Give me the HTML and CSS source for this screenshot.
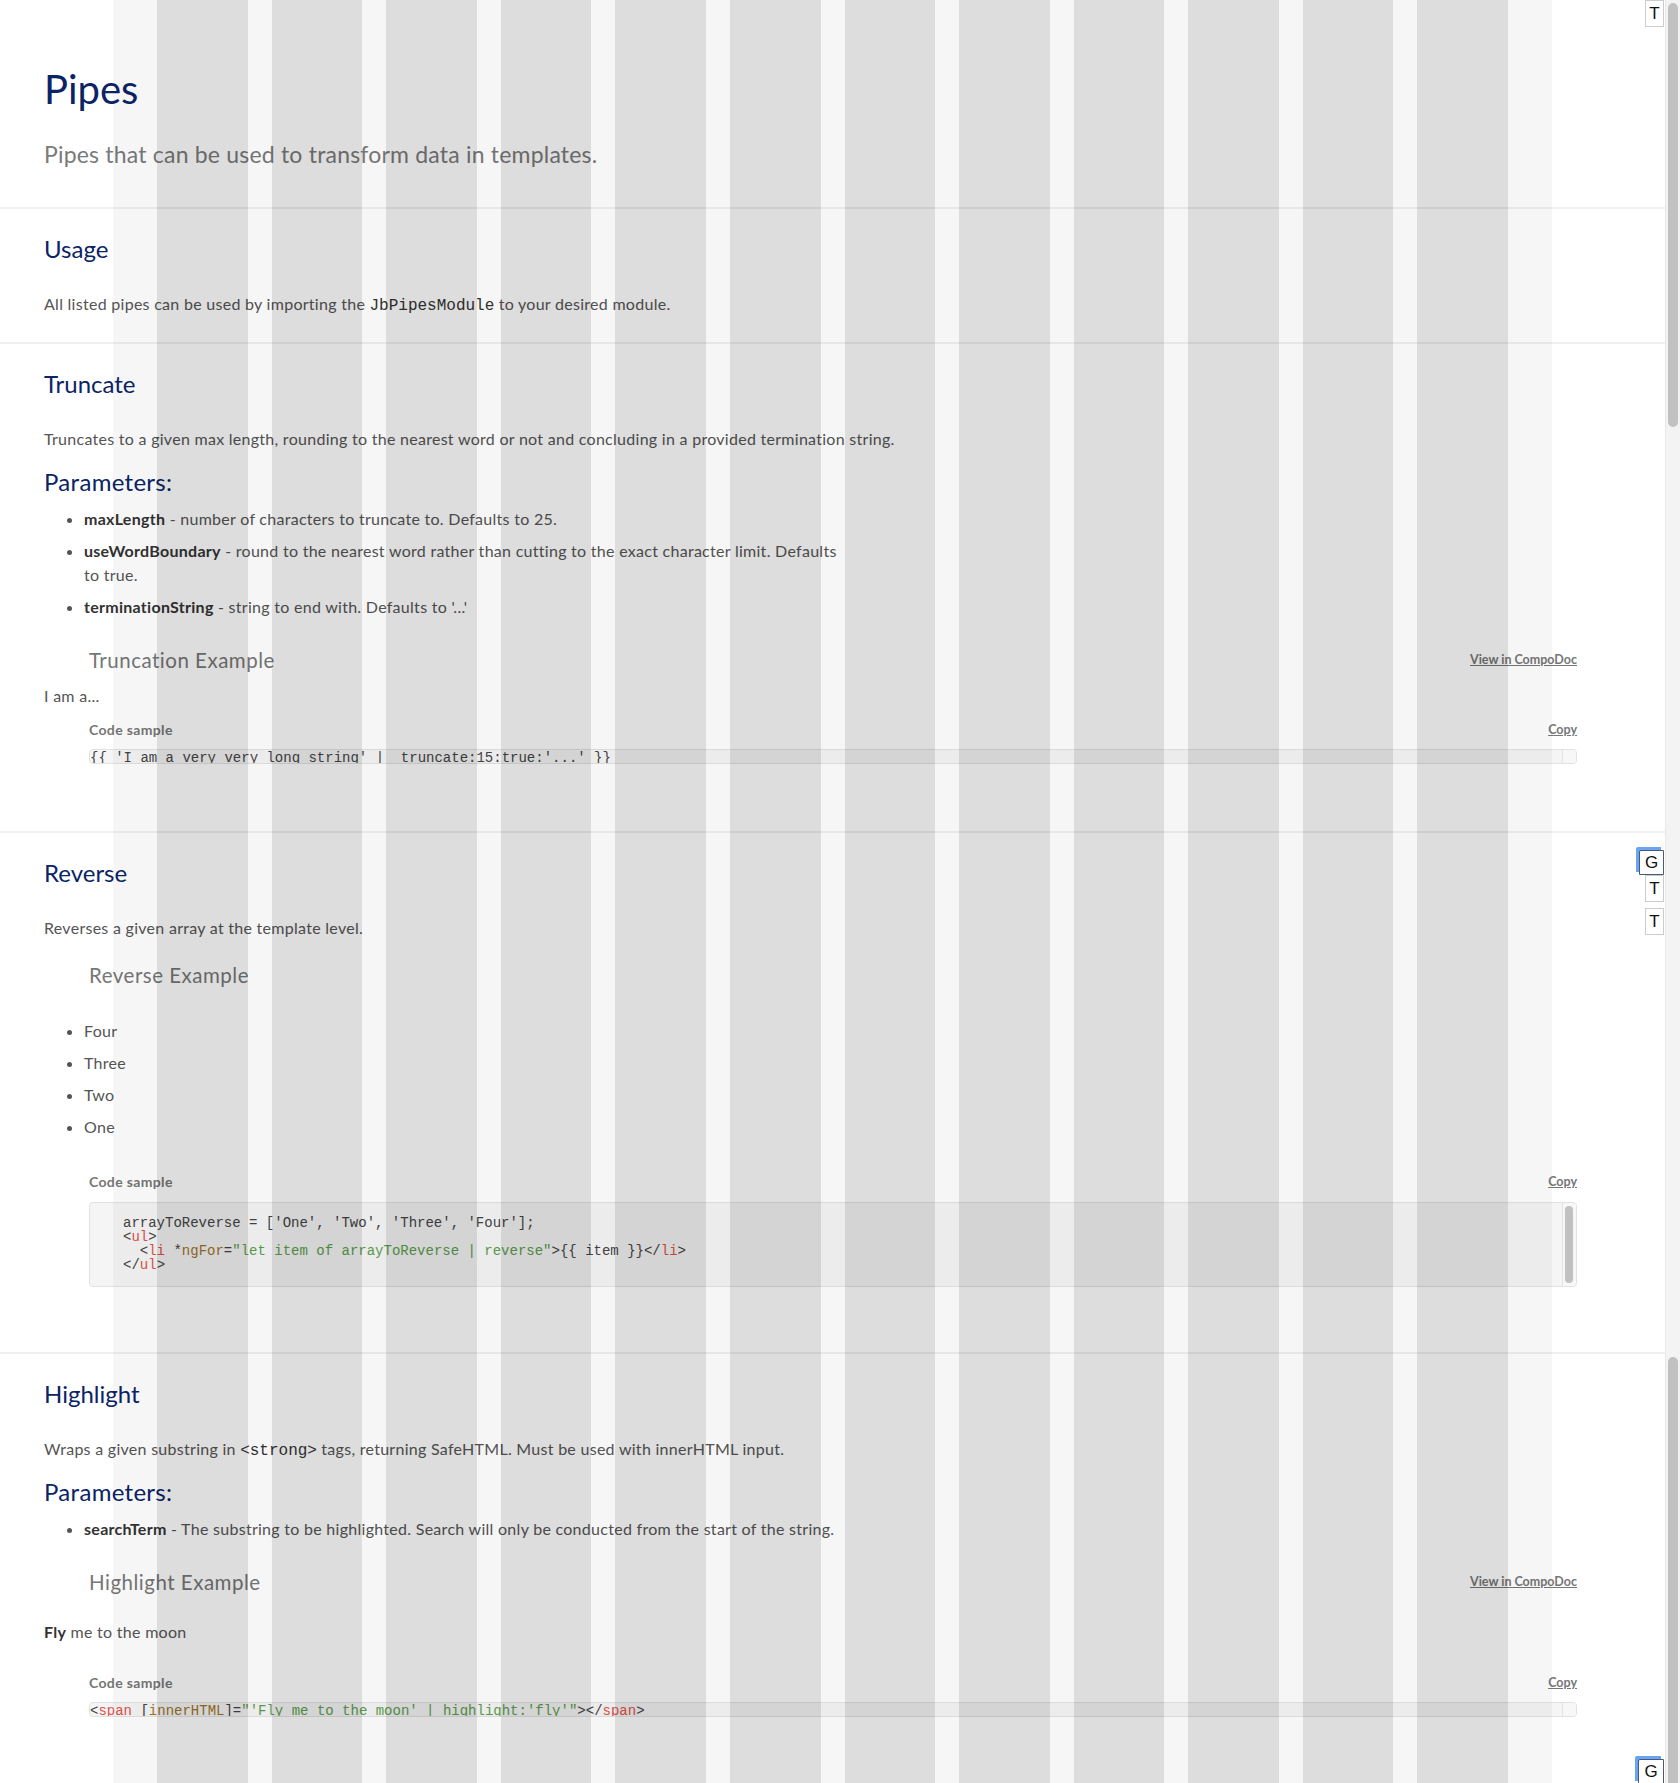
FILE: index.html
```html
<!DOCTYPE html>
<html lang="en">
<head>
<meta charset="utf-8">
<title>Pipes</title>
<link rel="stylesheet" href="styles.css">
</head>
<body>
<div class="page">
  <header class="intro">
    <h1 class="title">Pipes</h1>
    <p class="lead">Pipes that can be used to transform data in templates.</p>
  </header>

  <section class="sec">
    <h2 class="sec-title">Usage</h2>
    <p class="text">All listed pipes can be used by importing the <code class="inline-code">JbPipesModule</code> to your desired module.</p>
  </section>

  <section class="sec sec--truncate">
    <h2 class="sec-title">Truncate</h2>
    <p class="text">Truncates to a given max length, rounding to the nearest word or not and concluding in a provided termination string.</p>
    <h3 class="params-title">Parameters:</h3>
    <ul class="params">
      <li><strong>maxLength</strong> - number of characters to truncate to. Defaults to 25.</li>
      <li><strong>useWordBoundary</strong> - round to the nearest word rather than cutting to the exact character limit. Defaults to true.</li>
      <li><strong>terminationString</strong> - string to end with. Defaults to '...'</li>
    </ul>
    <div class="example">
      <div class="example-head">
        <h4 class="example-title">Truncation Example</h4>
        <a class="link" href="#">View in CompoDoc</a>
      </div>
      <div class="example-body example-body--plain">I am a...</div>
      <div class="code-sample">
        <div class="code-head"><span class="code-label">Code sample</span><a class="link" href="#">Copy</a></div>
        <div class="code code--single"><pre class="code-text">{{ 'I am a very very long string' |  truncate:15:true:'...' }}</pre><div class="code-track"></div></div>
      </div>
    </div>
  </section>

  <section class="sec sec--reverse">
    <h2 class="sec-title">Reverse</h2>
    <p class="text">Reverses a given array at the template level.</p>
    <div class="example example--after-text">
      <div class="example-head">
        <h4 class="example-title">Reverse Example</h4>
      </div>
      <ul class="example-list">
        <li>Four</li>
        <li>Three</li>
        <li>Two</li>
        <li>One</li>
      </ul>
      <div class="code-sample code-sample--after-list">
        <div class="code-head"><span class="code-label">Code sample</span><a class="link" href="#">Copy</a></div>
        <div class="code code--block"><pre class="code-text">arrayToReverse = ['One', 'Two', 'Three', 'Four'];
&lt;<span class="t-tag">ul</span>&gt;
  &lt;<span class="t-tag">li</span> *<span class="t-attr">ngFor</span>=<span class="t-str">"let item of arrayToReverse | reverse"</span>&gt;{{ item }}&lt;/<span class="t-tag">li</span>&gt;
&lt;/<span class="t-tag">ul</span>&gt;</pre><div class="code-track"><div class="code-thumb"></div></div></div>
      </div>
    </div>
  </section>

  <section class="sec sec--highlight">
    <h2 class="sec-title">Highlight</h2>
    <p class="text">Wraps a given substring in <code class="inline-code">&lt;strong&gt;</code> tags, returning SafeHTML. Must be used with innerHTML input.</p>
    <h3 class="params-title">Parameters:</h3>
    <ul class="params">
      <li><strong>searchTerm</strong> - The substring to be highlighted. Search will only be conducted from the start of the string.</li>
    </ul>
    <div class="example">
      <div class="example-head">
        <h4 class="example-title">Highlight Example</h4>
        <a class="link" href="#">View in CompoDoc</a>
      </div>
      <p class="example-body example-body--para"><strong>Fly</strong> me to the moon</p>
      <div class="code-sample code-sample--after-para">
        <div class="code-head"><span class="code-label">Code sample</span><a class="link" href="#">Copy</a></div>
        <div class="code code--single"><pre class="code-text">&lt;<span class="t-tag">span</span> [<span class="t-attr">innerHTML</span>]=<span class="t-str">"'Fly me to the moon' | highlight:'fly'"</span>&gt;&lt;/<span class="t-tag">span</span>&gt;</pre><div class="code-track"></div></div>
      </div>
    </div>
  </section>
</div>

<div class="grid-overlay" aria-hidden="true">
  <div class="grid-col"></div><div class="grid-col"></div><div class="grid-col"></div><div class="grid-col"></div>
  <div class="grid-col"></div><div class="grid-col"></div><div class="grid-col"></div><div class="grid-col"></div>
  <div class="grid-col"></div><div class="grid-col"></div><div class="grid-col"></div><div class="grid-col"></div>
</div>

<div class="scrollbar" aria-hidden="true">
  <div class="scroll-thumb scroll-thumb--top"></div>
  <div class="scroll-thumb scroll-thumb--bottom"></div>
</div>

<div class="ext-btn ext-btn--t1">T</div>
<div class="ext-btn ext-btn--g ext-btn--g1">G</div>
<div class="ext-btn ext-btn--t2">T</div>
<div class="ext-btn ext-btn--t3">T</div>
<div class="ext-btn ext-btn--g ext-btn--g2">G</div>
</body>
</html>
```

FILE: styles.css
```css
html, body {
  margin: 0;
  padding: 0;
  height: 1783px;
  overflow: hidden;
  background: #ffffff;
}

body {
  position: relative;
  font-family: "Lato", "Liberation Sans", sans-serif;
  color: #555555;
}

.page {
  width: 1665px;
}

/* Intro */
.intro {
  padding: 65px 44px 38px;
}

.title {
  margin: 0;
  font-size: 40px;
  line-height: 48px;
  font-weight: 400;
  color: #0b2466;
}

.lead {
  margin: 26px 0 0;
  font-size: 23px;
  line-height: 30px;
  letter-spacing: 0.2px;
  color: #7a7a7a;
}

/* Sections */
.sec {
  border-top: 2px solid #f0f0f0;
  padding: 25px 44px 26px;
}

.sec--truncate { padding-bottom: 67px; }
.sec--reverse { padding-bottom: 65px; }
.sec--highlight { padding-bottom: 65px; }

.sec-title {
  margin: 0;
  font-size: 24px;
  line-height: 30px;
  font-weight: 400;
  color: #0b2466;
}

.text {
  margin: 28px 0 0;
  font-size: 16px;
  line-height: 24px;
  letter-spacing: 0.28px;
  color: #555555;
}

.inline-code {
  font-family: "Liberation Mono", monospace;
  font-size: 16px;
  line-height: 1;
  letter-spacing: 0;
  color: #333333;
}

.params-title {
  margin: 16px 0 0;
  font-size: 24px;
  line-height: 30px;
  font-weight: 400;
  letter-spacing: 0.3px;
  color: #0b2466;
}

.params {
  margin: 10px 0 0;
  padding-left: 40px;
  max-width: 760px;
  font-size: 16px;
  line-height: 24px;
  letter-spacing: 0.28px;
  color: #555555;
}

.params li {
  margin-bottom: 8px;
}

.params strong {
  color: #333333;
  font-weight: 700;
}

/* Examples */
.example {
  margin-top: 29px;
}

.example--after-text {
  margin-top: 23px;
}

.example-head {
  display: flex;
  align-items: center;
  justify-content: space-between;
  margin: 0 44px 0 45px;
}

.example-title {
  margin: 0;
  font-size: 20.5px;
  line-height: 24px;
  font-weight: 400;
  letter-spacing: 0.5px;
  color: #777777;
}

.link {
  font-family: "Lato", "Liberation Sans", sans-serif;
  font-size: 12.5px;
  line-height: 16px;
  font-weight: 700;
  color: #777777;
  text-decoration: underline;
}

.example-body {
  font-size: 16px;
  line-height: 24px;
  letter-spacing: 0.28px;
  color: #555555;
}

.example-body--plain {
  margin-top: 12px;
}

.example-body--para {
  margin: 26px 0 0;
}

.example-body--para strong {
  color: #333333;
}

.example-list {
  margin: 32px 0 0;
  padding: 0 0 8px 40px;
  font-size: 16px;
  line-height: 24px;
  letter-spacing: 0.28px;
}

.example-list li + li {
  margin-top: 8px;
}

.code-sample {
  margin: 14px 44px 0 45px;
}

.code-sample--after-list { margin-top: 27px; }
.code-sample--after-para { margin-top: 31px; }

.code-head {
  display: flex;
  align-items: center;
  justify-content: space-between;
}

.code-label {
  font-size: 14px;
  line-height: 16px;
  font-weight: 700;
  letter-spacing: 0.35px;
  color: #777777;
}

.code {
  display: flex;
  margin-top: 12px;
  background: #f5f5f5;
  border: 1px solid #e2e2e2;
  border-radius: 4px;
  overflow: hidden;
}

.code-text {
  flex: 1;
  margin: 0;
  font-family: "Liberation Mono", monospace;
  font-size: 14px;
  line-height: 14px;
  color: #444444;
  white-space: pre;
  overflow: hidden;
}

.code--single {
  height: 15px;
  box-sizing: border-box;
  margin-top: 11px;
}

.code--single .code-text {
  padding-top: 1px;
}

.code--block .code-text {
  padding: 13px 0 14px 33px;
}

.code-track {
  width: 14px;
  border-left: 1px solid #e4e4e4;
  background: #f7f7f7;
  padding: 3px 0;
  box-sizing: border-box;
}

.code-thumb {
  height: 100%;
  margin: 0 3px 0 2px;
  border-radius: 5px;
  background: #c1c1c1;
}

.t-tag { color: #e0524b; }
.t-attr { color: #a0742a; }
.t-str { color: #5b9e4d; }

/* Grid overlay */
.grid-overlay {
  position: absolute;
  top: 0;
  left: 113px;
  width: 1439px;
  height: 1783px;
  box-sizing: border-box;
  padding: 0 44px;
  display: grid;
  grid-template-columns: repeat(12, 1fr);
  column-gap: 24px;
  background: rgba(0, 0, 0, 0.035);
  pointer-events: none;
}

.grid-col {
  background: rgba(0, 0, 0, 0.1);
}

/* Page scrollbar */
.scrollbar {
  position: absolute;
  top: 0;
  right: 0;
  width: 15px;
  height: 1783px;
  background: #f3f3f3;
  border-left: 1px solid #e8e8e8;
  box-sizing: border-box;
}

.scroll-thumb {
  position: absolute;
  left: 2px;
  width: 10px;
  border-radius: 5px;
  background: #c1c1c1;
}

.scroll-thumb--top {
  top: 3px;
  height: 424px;
}

.scroll-thumb--bottom {
  top: 1357px;
  height: 440px;
}

/* Extension buttons */
.ext-btn {
  position: absolute;
  box-sizing: border-box;
  width: 19px;
  height: 27px;
  right: 16px;
  background: #ffffff;
  border: 1px solid #cccccc;
  font-family: "Liberation Sans", Arial, sans-serif;
  font-size: 17px;
  line-height: 25px;
  text-align: center;
  color: #111111;
}

.ext-btn--t1 { top: 0; }
.ext-btn--t2 { top: 875px; }
.ext-btn--t3 { top: 908px; }

.ext-btn--g {
  width: 25px;
  height: 25px;
  line-height: 23px;
  border: 1px solid #4a5a72;
  box-shadow: -3px -3px 0 0 #6aa5f5;
  border-top-left-radius: 2px;
}

.ext-btn--g1 { top: 850px; }
.ext-btn--g2 { top: 1759px; width: 26px; }
```
